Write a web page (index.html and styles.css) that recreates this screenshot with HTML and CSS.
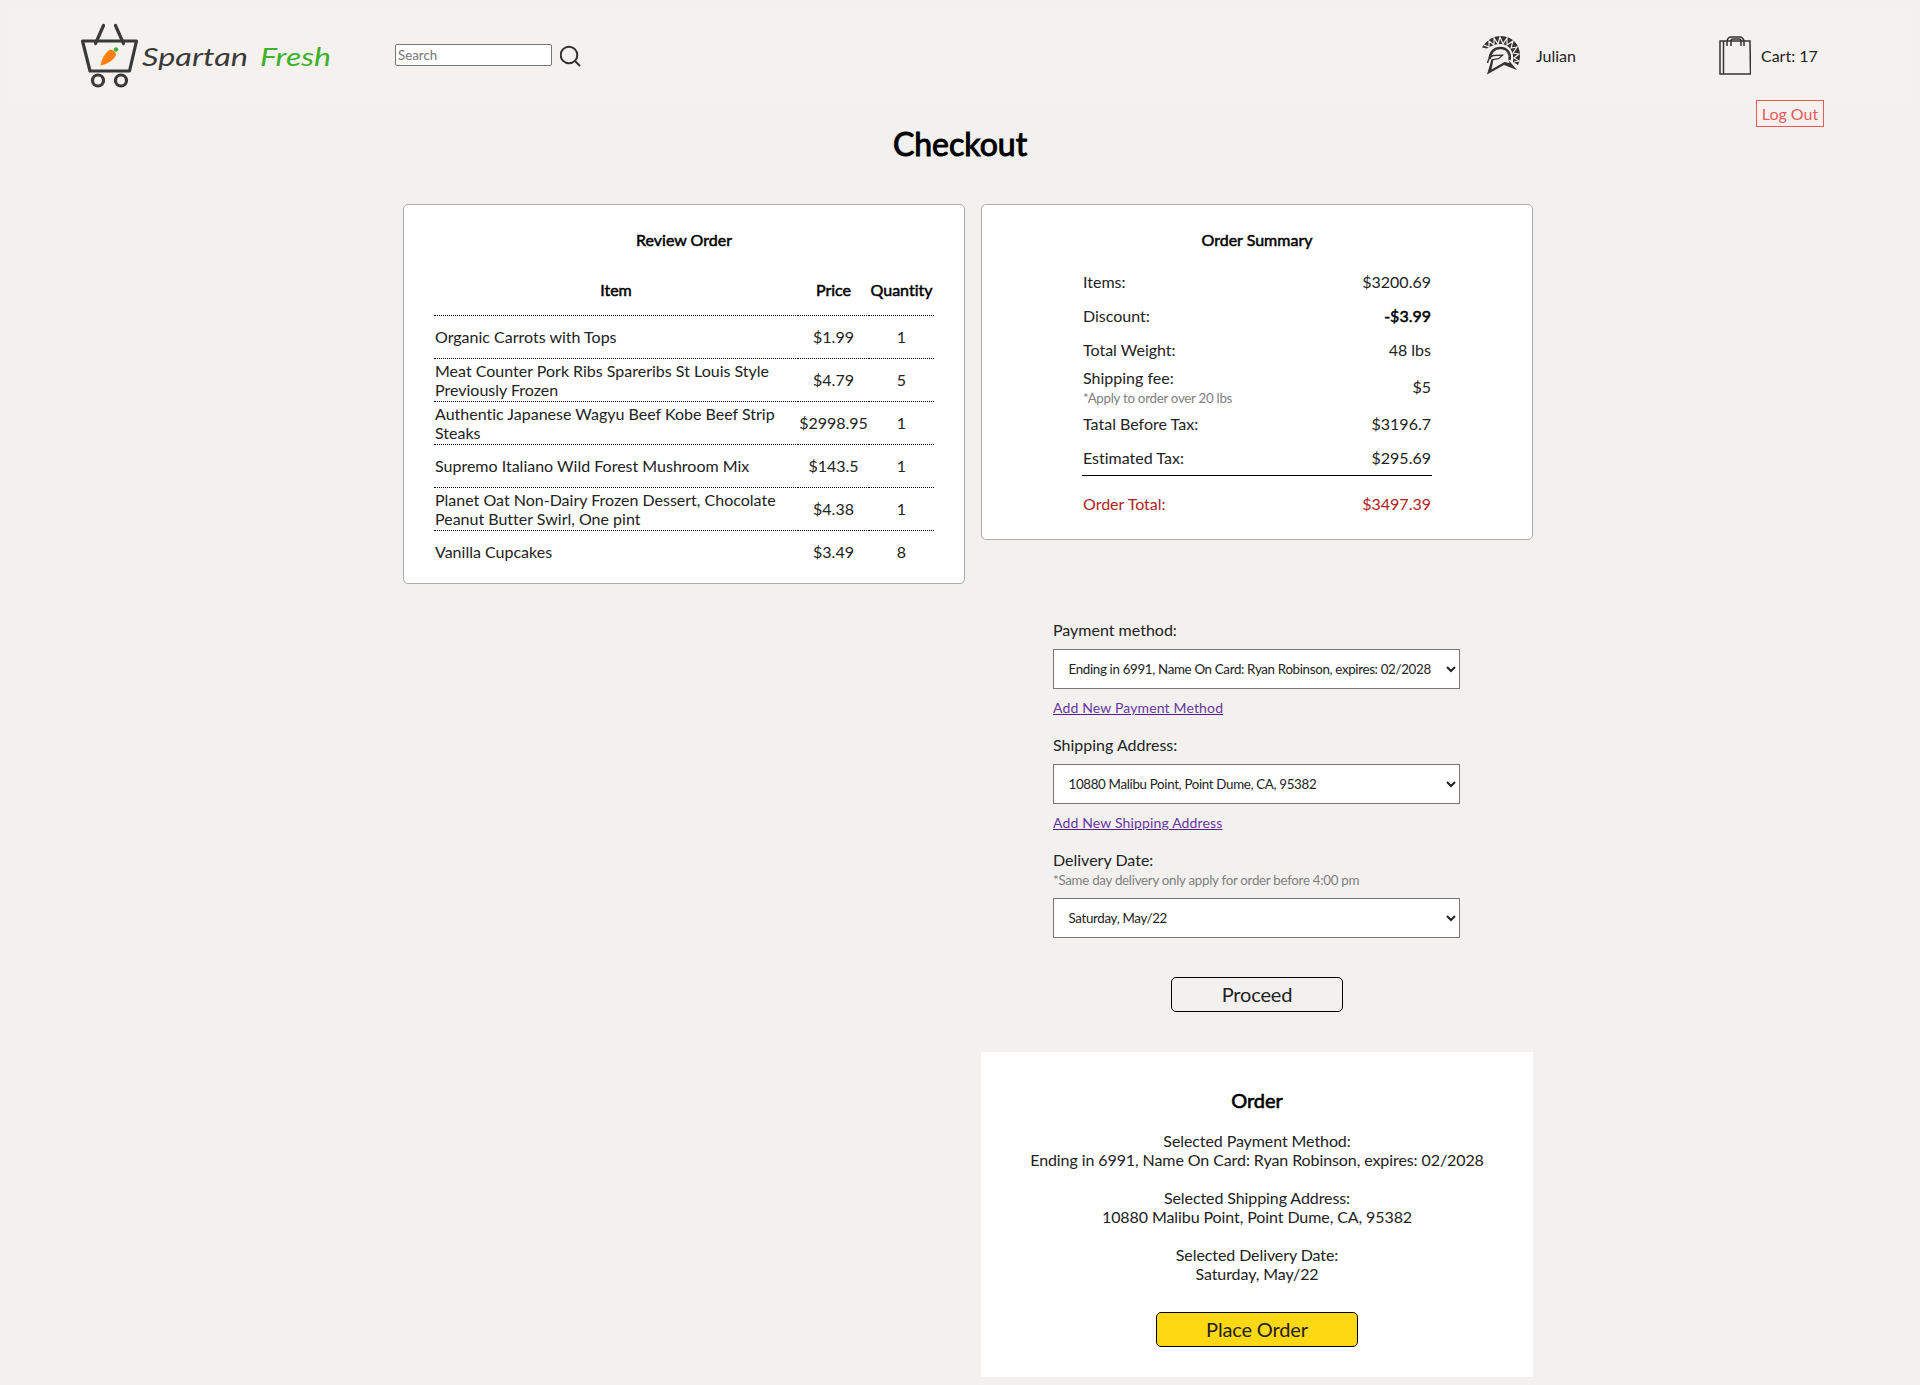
FILE: index.html
```html
<!DOCTYPE html>
<html lang="en">
<head>
<meta charset="utf-8">
<title>Checkout - Spartan Fresh</title>
<link rel="stylesheet" href="styles.css">
</head>
<body>
<header class="topbar">
  <a class="logo" aria-label="Spartan Fresh">
    <svg width="260" height="76" viewBox="0 0 260 76">
      <g fill="none" stroke="#3a3a38" stroke-linecap="round" stroke-linejoin="round" stroke-width="3.2">
        <path d="M6.500 24h54l-7 30h-39.500z"/>
        <path d="M27.500 8.500l-8 18M39.500 8.500l8 18"/>
        <circle cx="22" cy="63.500" r="5.500"/><circle cx="45" cy="63.500" r="5.500"/>
      </g>
      <path fill="#ff7f0e" d="M24.500 48.500c1-7 5-13 9-15.500 3-1 6.500 2 6.500 5-2 5-8 9-15.500 10.500z"/>
      <circle cx="40" cy="32.500" r="2.300" fill="#3eb13a"/>
      <text class="logo-text" x="66" y="49" textLength="106" lengthAdjust="spacingAndGlyphs" fill="#3a3a38">Spartan</text>
      <text class="logo-text" x="184" y="49" textLength="71" lengthAdjust="spacingAndGlyphs" fill="#3eb12a">Fresh</text>
    </svg>
  </a>
  <form class="search">
    <input class="search-input" type="text" placeholder="Search">
    <svg width="22" height="22" viewBox="0 0 22 22" fill="none" stroke="#333" stroke-width="2"><circle cx="9" cy="10" r="8.300"/><path d="M15 16l5 5"/></svg>
  </form>
  <div class="account">
    <svg width="40" height="41" viewBox="0 0 40 41">
      <path fill="#333" d="M0 12.500C6 4 12 1 19 1c11 .5 18.500 8 19 18 0 5-.5 8-2 11l-5-3c1.500-9-3-17.500-12-18-6 0-10 2-14 4.500z"/>
      <path fill="none" stroke="#f5f1ee" stroke-width="1.200" d="M2 10l5 2 0-6 5 4 0-7 4 6 2-7 3 7 4-6 0 7 6-4-2 7 6-1-4 6 6 1-5 4 5 3-5 1"/>
      <path fill="none" stroke="#333" stroke-width="2.500" d="M7.500 24c1-7 5-11 11-11 7 0 10.500 6 9 12"/>
      <path fill="none" stroke="#333" stroke-width="1.300" d="M5.500 28c1-4 3-7 6-7.500l9-.3-4 3.500-6 1"/>
      <path fill="#333" d="M9.500 24l2 .5-2 10 13-7.500 5 1-1-3 8.500 10-13-5L5 39.500l3-10z"/>
    </svg>
    <span>Julian</span>
  </div>
  <div class="cart">
    <svg width="32" height="40" viewBox="0 0 32 40" fill="none" stroke="#333" stroke-width="1.500"><path d="M1 6h30l.5 33H1zM4.500 6v33M8 11V6q1-4 4-4h9q3 0 4 4v5M12 11V6q0-2 2-2h6q2 0 2 2v5"/></svg>
    <span>Cart: 17</span>
  </div>
  <button class="logout">Log Out</button>
</header>
<main>
  <h1 class="page-title">Checkout</h1>
  <div class="checkout">
    <section class="card review">
      <h2 class="card-title">Review Order</h2>
      <table class="items">
        <colgroup><col class="col-item"><col class="col-price"><col class="col-qty"></colgroup>
        <tr><th>Item</th><th>Price</th><th>Quantity</th></tr>
        <tr><td>Organic Carrots with Tops</td><td>$1.99</td><td>1</td></tr>
        <tr><td>Meat Counter Pork Ribs Spareribs St Louis Style Previously Frozen</td><td>$4.79</td><td>5</td></tr>
        <tr><td>Authentic Japanese Wagyu Beef Kobe Beef Strip Steaks</td><td>$2998.95</td><td>1</td></tr>
        <tr><td>Supremo Italiano Wild Forest Mushroom Mix</td><td>$143.5</td><td>1</td></tr>
        <tr><td>Planet Oat Non-Dairy Frozen Dessert, Chocolate Peanut Butter Swirl, One pint</td><td>$4.38</td><td>1</td></tr>
        <tr><td>Vanilla Cupcakes</td><td>$3.49</td><td>8</td></tr>
      </table>
    </section>
    <div class="side">
      <section class="card summary">
        <h2 class="card-title">Order Summary</h2>
        <dl class="totals">
          <div class="line"><dt>Items:</dt><dd>$3200.69</dd></div>
          <div class="line"><dt>Discount:</dt><dd class="strong">-$3.99</dd></div>
          <div class="line"><dt>Total Weight:</dt><dd>48 lbs</dd></div>
          <div class="line fee"><dt>Shipping fee:<br><small class="note">*Apply to order over 20 lbs</small></dt><dd>$5</dd></div>
          <div class="line"><dt>Tatal Before Tax:</dt><dd>$3196.7</dd></div>
          <div class="line"><dt>Estimated Tax:</dt><dd>$295.69</dd></div>
          <div class="line grand"><dt>Order Total:</dt><dd>$3497.39</dd></div>
        </dl>
      </section>
      <form class="options">
        <label class="label">Payment method:</label>
        <select class="select"><option>Ending in 6991, Name On Card: Ryan Robinson, expires: 02/2028</option></select>
        <a class="link" href="#">Add New Payment Method</a>
        <label class="label">Shipping Address:</label>
        <select class="select"><option>10880 Malibu Point, Point Dume, CA, 95382</option></select>
        <a class="link" href="#">Add New Shipping Address</a>
        <label class="label with-note">Delivery Date:</label>
        <small class="note">*Same day delivery only apply for order before 4:00 pm</small>
        <select class="select"><option>Saturday, May/22</option></select>
        <button class="btn proceed" type="button">Proceed</button>
      </form>
      <section class="order">
        <h2 class="order-title">Order</h2>
        <p>Selected Payment Method:<br>Ending in 6991, Name On Card: Ryan Robinson, expires: 02/2028</p>
        <p>Selected Shipping Address:<br>10880 Malibu Point, Point Dume, CA, 95382</p>
        <p>Selected Delivery Date:<br>Saturday, May/22</p>
        <button class="btn place">Place Order</button>
      </section>
    </div>
  </div>
</main>
</body>
</html>
```

FILE: styles.css
```css
* { box-sizing: border-box; }
body { margin: 8px; background: #f2f1ef; color: #222; font: 16px/19px Lato, sans-serif; font-variant-ligatures: none; }
h1, h2, p, dl, dd { margin: 0; }
h1, h2, th { color: #000; }
button, input, select { font-family: inherit; }

.topbar { position: relative; display: flex; align-items: center; height: 94px; background: #f5f1ee; }
.logo { display: flex; width: 260px; margin-left: 68px; }
.logo-text { font: italic 400 25px "Bradley Hand", "Segoe Script", Lato, cursive; }
.search { display: flex; align-items: center; gap: 8px; margin-left: 59px; }
.search-input { width: 157px; height: 22px; padding: 1px 2px; border: 1px solid #767676; border-radius: 2px; font-size: 13.333px; }
.search svg { margin-top: 2px; }
.account { display: flex; align-items: center; gap: 14px; margin-left: 900px; }
.cart { display: flex; align-items: center; gap: 10px; margin-left: 143px; }
.logout { position: absolute; right: 88px; top: 92px; width: 68px; height: 27px; padding: 0; border: 1px solid #e85a5a; background: #f5f1ee; color: #e85a5a; font-size: 16px; }

.page-title { margin: 22px 0 40px; font-size: 32px; line-height: 40px; font-weight: 400; text-align: center; -webkit-text-stroke: 1px; }
.checkout { display: flex; align-items: flex-start; gap: 16px; margin-left: 395px; }
.card { border: 1px solid #adadad; border-radius: 5px; background: #fff; }
.card-title { font-size: 16px; font-weight: 400; text-align: center; -webkit-text-stroke: .5px; }
.review { width: 562px; height: 380px; padding: 25px 30px 0; }
.items { width: 500px; margin-top: 16px; table-layout: fixed; border-collapse: collapse; }
.col-item { width: 364px; }
.col-price { width: 71px; }
.col-qty { width: 65px; }
.items tr { height: 43px; }
.items tr:first-child { height: 50px; }
.items tr + tr { border-top: 1px dotted #000; }
.items td, .items th { padding: 1px; text-align: center; }
.items td:first-child { padding-right: 14px; text-align: left; }
.items th { font-weight: 400; -webkit-text-stroke: .5px; }

.side { width: 552px; }
.summary { height: 336px; padding: 25px 100px 0; }
.totals { margin-top: 15px; }
.line { display: flex; align-items: center; justify-content: space-between; height: 34px; padding: 0 1px; }
.fee { height: 40px; }
.fee dt { padding-top: 4px; }
.strong { color: #000; -webkit-text-stroke: .5px; }
.note { color: #808080; font-size: 13.333px; letter-spacing: -.28px; }
.grand { height: 55px; margin-top: 1px; border-top: 1px solid #000; color: #b22222; }

.options { display: flex; flex-direction: column; align-items: flex-start; width: 408px; margin: 80px auto 0; }
.label { margin-bottom: 10px; }
.label.with-note { margin-bottom: 2px; }
.select { width: 407px; height: 40px; padding: 0 1px 0 10.5px; border: 1px solid #767676; border-radius: 0; background: #fff; color: #222; font-size: 13.333px; letter-spacing: -.33px; }
.link { margin: 9px 0 18px; color: #6a35a0; font-size: 14px; letter-spacing: .15px; text-decoration-color: #551a8b; }
.options .note { margin-bottom: 8px; }
.btn { height: 35px; padding: 0 0 1px; border: 1px solid #000; border-radius: 5px; background: none; color: #222; font-size: 20px; letter-spacing: -.15px; }
.proceed { width: 172px; margin: 39px auto 0; }

.order { height: 325px; margin-top: 40px; padding-top: 36px; background: #fff; text-align: center; }
.order-title { margin-bottom: 19px; font-size: 20px; line-height: 24px; font-weight: 400; -webkit-text-stroke: .6px; }
.order p { margin-bottom: 19px; letter-spacing: -.09px; }
.place { width: 202px; margin-top: 10px; background: #ffd814; }
```
